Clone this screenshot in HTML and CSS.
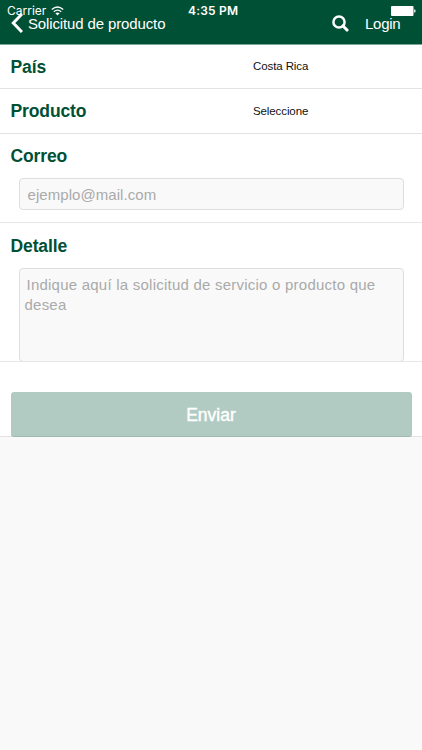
FILE: index.html
```html
<!DOCTYPE html>
<html lang="es">
<head>
<meta charset="utf-8">
<title>Solicitud de producto</title>
<link rel="stylesheet" href="styles.css">
</head>
<body>
<header class="navbar">
  <div class="status">
    <span class="carrier">Carrier</span>
    <svg class="wifi" width="13" height="10" viewBox="0 0 13 10" fill="none" stroke="#fff" stroke-width="1.4"><path d="M.8 3.5Q6.5-1.3 12.2 3.5M2.8 5.7Q6.5 2.6 10.2 5.7"/><path d="M4.4 7.3Q6.5 5.7 8.6 7.3L6.5 9.5Z" fill="#fff" stroke="none"/></svg>
    <span class="clock">4:35 PM</span>
    <svg class="battery" width="25" height="10" viewBox="0 0 25 10" fill="#fff"><rect width="22.5" height="10" rx="1"/><path d="M23.2 3.2Q24.6 3.5 24.6 5T23.2 6.8Z"/></svg>
  </div>
  <svg class="back" width="12" height="20" viewBox="0 0 12 20" fill="none" stroke="#fff" stroke-width="3"><path d="M11 1L2.3 10L11 19"/></svg>
  <h1 class="title">Solicitud de producto</h1>
  <svg class="search" width="17" height="17" viewBox="0 0 17 17" fill="none" stroke="#fff" stroke-width="2.5"><circle cx="7" cy="7" r="5.6"/><path d="M11 11L15 15" stroke-width="3.1" stroke-linecap="round"/></svg>
  <a class="login">Login</a>
</header>
<main class="form">
  <div class="row pais"><span class="label">País</span><span class="value">Costa Rica</span></div>
  <div class="row producto"><span class="label">Producto</span><span class="value">Seleccione</span></div>
  <div class="field correo"><span class="label">Correo</span><div class="box mail">ejemplo@mail.com</div></div>
  <div class="field detalle"><span class="label">Detalle</span><div class="box area"><span class="first">Indique aquí la solicitud de servicio o producto que</span><br>desea</div></div>
  <div class="actions"><button class="send">Enviar</button></div>
</main>
</body>
</html>
```
FILE: styles.css
```css
* { box-sizing: border-box; }
body {
  margin: 0;
  height: 750px;
  overflow: hidden;
  background: #f9f9f9;
  font-family: "Liberation Sans", Arial, sans-serif;
}
svg { display: block; flex: none; }
.navbar {
  position: relative;
  display: flex;
  align-items: flex-start;
  height: 45px;
  padding-left: 11px;
  background: #005035;
  border-bottom: 1px solid #7fa799;
  color: #fff;
}
.status {
  position: absolute;
  inset: 0 0 auto;
  display: flex;
  height: 22px;
  padding: 0 6px 0 7px;
  font: 12px/22px Inter, sans-serif;
}
.carrier { width: 44px; letter-spacing: 0; }
.wifi { margin-top: 6px; }
.clock { margin-left: 124px; font-weight: 600; letter-spacing: 0.2px; }
.battery { margin: 6px 0 0 auto; }
.back { margin-top: 13px; }
.title {
  width: 308px;
  margin: 0 0 0 5px;
  font-size: 15px;
  font-weight: 400;
  line-height: 48px;
  letter-spacing: -0.13px;
  white-space: nowrap;
}
.search { margin: 15px 0 0 -4px; }
.login { margin-left: 16px; font-size: 15px; line-height: 48px; letter-spacing: -0.25px; }
.form { background: #fff; }
.row {
  display: flex;
  height: 44px;
  border-bottom: 1px solid #e3e3e3;
  line-height: 44px;
}
.producto { height: 45px; line-height: 45px; }
.label {
  display: block;
  width: 243px;
  padding-left: 10.5px;
  margin-right: 10px;
  color: #005035;
  font-size: 17.5px;
  font-weight: 700;
  letter-spacing: -0.12px;
}
.value { color: #111; font-size: 11.5px; line-height: 43px; letter-spacing: -0.1px; }
.producto .value { line-height: 44px; }
.field { border-bottom: 1px solid #e7e7e7; line-height: 45px; }
.correo { height: 89px; }
.correo .label { height: 44px; line-height: 45px; }
.detalle { height: 139px; overflow: hidden; }
.detalle .label { height: 45px; line-height: 46px; }
.box {
  width: 385px;
  margin-left: 18.5px;
  border: 1px solid #dedede;
  border-radius: 4px;
  background: #f9f9f9;
  color: #aaa;
  font-size: 15px;
}
.mail { height: 32px; padding-left: 8px; line-height: 31px; letter-spacing: 0.06px; }
.area { height: 94px; padding: 6px 0 0 5px; line-height: 20px; letter-spacing: 0.23px; white-space: nowrap; }
.first { padding-left: 2px; }
.actions { height: 75px; padding: 30px 10px 0 10.5px; border-bottom: 1px solid #e3e3e3; }
.send {
  display: block;
  width: 401px;
  height: 45px;
  padding: 0;
  border: 0;
  border-bottom: 1px solid #9fb9b0;
  border-radius: 3px;
  background: #b2cbc2;
  color: #fff;
  font: 17.5px/46px "Liberation Sans", Arial, sans-serif;
  -webkit-text-stroke: 0.4px #fff;
}
```
